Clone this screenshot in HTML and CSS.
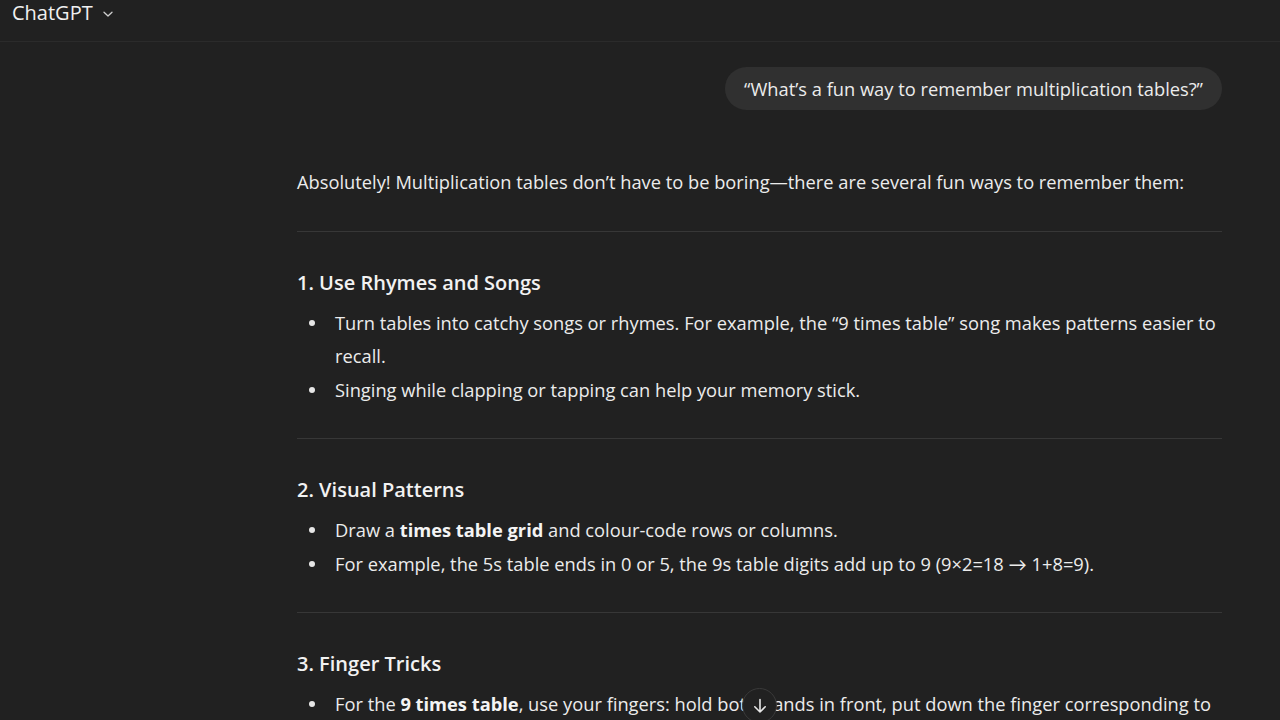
FILE: index.html
```html
<!DOCTYPE html>
<html lang="en">
<head>
<meta charset="utf-8">
<title>ChatGPT</title>
<link rel="stylesheet" href="styles.css">
</head>
<body>
<header class="topbar">
  <div class="model">ChatGPT
    <svg class="chev" width="12" height="12" viewBox="0 0 12 12"><path d="M2 4.2 L6 8 L10 4.2" fill="none" stroke="#cfcfcf" stroke-width="1.3" stroke-linecap="round" stroke-linejoin="round"/></svg>
  </div>
</header>
<main class="thread">
  <div class="user-row">
    <div class="bubble">“What’s a fun way to remember multiplication tables?”</div>
  </div>
  <div class="answer">
    <p class="intro">Absolutely! Multiplication tables don’t have to be boring—there are several fun ways to remember them:</p>
    <hr class="sep">
    <h3 class="h">1. Use Rhymes and Songs</h3>
    <ul class="list">
      <li><span>Turn tables into catchy songs or rhymes. For example, the “9 times table” song makes patterns easier to recall.</span></li>
      <li><span>Singing while clapping or tapping can help your memory stick.</span></li>
    </ul>
    <hr class="sep">
    <h3 class="h">2. Visual Patterns</h3>
    <ul class="list">
      <li><span>Draw a <strong>times table grid</strong> and colour-code rows or columns.</span></li>
      <li><span>For example, the 5s table ends in 0 or 5, the 9s table digits add up to 9 (9×2=18 → 1+8=9).</span></li>
    </ul>
    <hr class="sep">
    <h3 class="h">3. Finger Tricks</h3>
    <ul class="list">
      <li><span>For the <strong>9 times table</strong>, use your fingers: hold both hands in front, put down the finger corresponding to the number you’re multiplying by.</span></li>
    </ul>
  </div>
</main>
<button class="scroll-down" aria-label="Scroll down">
  <svg width="20" height="20" viewBox="0 0 20 20"><path d="M10 3.5 V16 M4.8 10.8 L10 16 L15.2 10.8" fill="none" stroke="#e6e6e6" stroke-width="1.6" stroke-linecap="round" stroke-linejoin="round"/></svg>
</button>
</body>
</html>
```
FILE: styles.css
```css
html, body {
  margin: 0;
  padding: 0;
  height: 720px;
  overflow: hidden;
  background: #212121;
  color: #ececec;
  font-family: "Open Sans", Lato, sans-serif;
}
.topbar {
  height: 42px;
  border-bottom: 1px solid #2b2b2b;
  display: flex;
  align-items: flex-start;
  padding-left: 12px;
  box-sizing: border-box;
}
.model {
  font-size: 20px;
  line-height: 26px;
  color: #f0f0f0;
  display: flex;
  align-items: center;
  gap: 9px;
}
.chev { margin-top: 1px; }
.thread {
  margin-left: 297px;
  width: 925px;
}
.user-row {
  display: flex;
  justify-content: flex-end;
  margin-top: 25px;
}
.bubble {
  background: #303030;
  border-radius: 22px;
  height: 43px;
  line-height: 43px;
  padding: 0 19px;
  font-size: 18.3px;
  color: #ececec;
}
.answer { padding-top: 55px; }
.intro {
  margin: 0;
  font-size: 18.3px;
  line-height: 33.5px;
}
.sep {
  border: 0;
  height: 1px;
  background: #373737;
  margin: 32px 0 36px;
}
.h {
  margin: 0;
  font-size: 20px;
  line-height: 30px;
  font-weight: 600;
  color: #f2f2f2;
}
.list {
  list-style: none;
  margin: 8px 0 0;
  padding: 0;
  font-size: 18.3px;
  line-height: 33.5px;
}
.list li {
  display: grid;
  grid-template-columns: 38px 1fr;
  align-items: start;
}
.list li::before {
  content: "";
  width: 6px;
  height: 6px;
  border-radius: 50%;
  background: #e6e6e6;
  margin: 14px 0 0 12px;
}
.list strong { font-weight: 700; color: #f4f4f4; }
.scroll-down {
  position: absolute;
  left: 742px;
  top: 688px;
  width: 35px;
  height: 35px;
  border-radius: 50%;
  border: 1px solid #3a3a3a;
  background: #212121;
  padding: 0;
  display: flex;
  align-items: center;
  justify-content: center;
}
```
